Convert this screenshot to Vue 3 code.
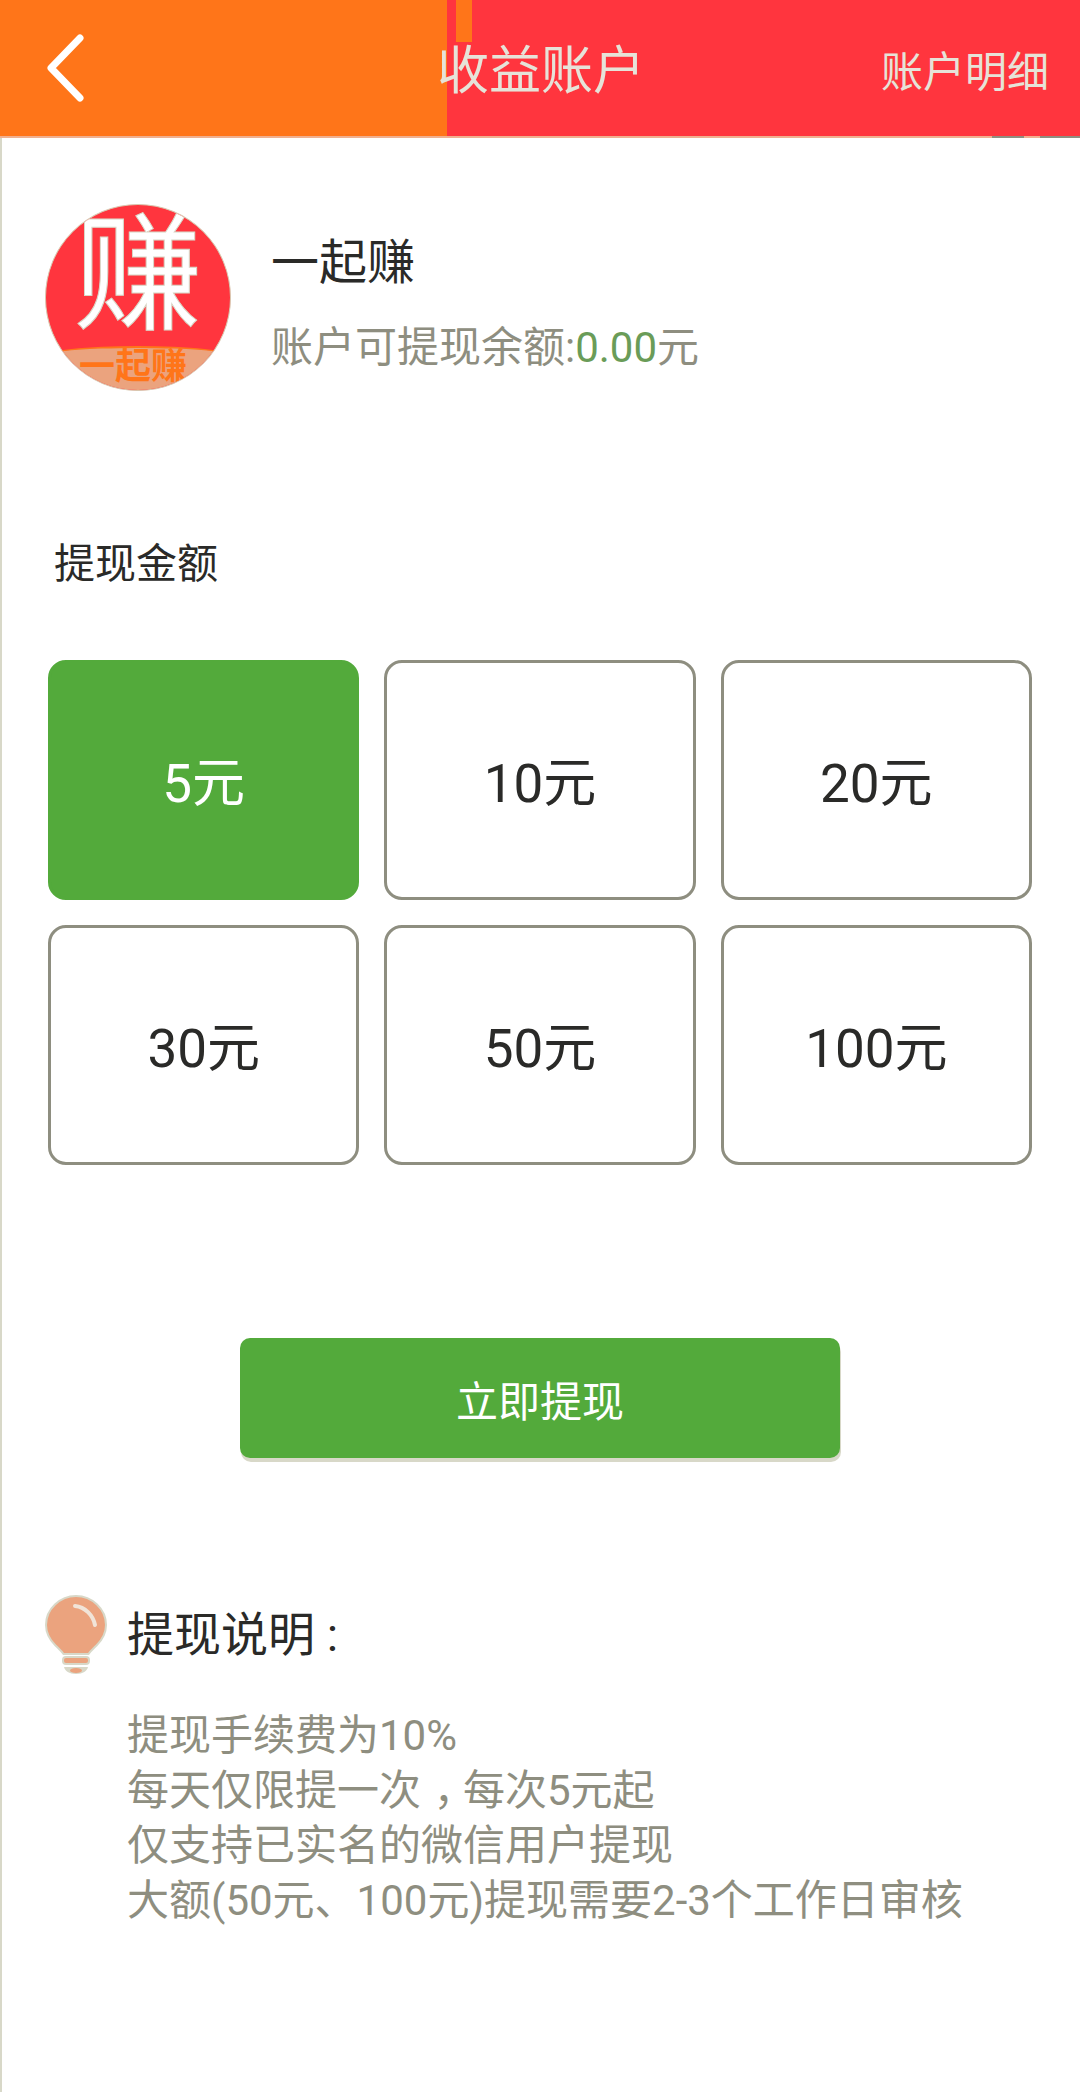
<template>
  <div class="page">
    <header class="top-bar">
      <svg class="back" width="38" height="70" viewBox="0 0 38 70" fill="none" stroke="#fff" stroke-width="7" stroke-linecap="round" stroke-linejoin="round">
        <polyline points="33 5 4 35 33 65" />
      </svg>
      <h1 class="title">收益账户</h1>
      <span class="detail-link">账户明细</span>
    </header>
    <div class="top-rule"></div>

    <main class="content">
      <section class="profile">
        <div class="avatar">
          <span class="avatar-big">赚</span>
          <div class="avatar-band"><span>一起赚</span></div>
        </div>
        <div class="profile-text">
          <div class="name">一起赚</div>
          <div class="balance">账户可提现余额:<em>0.00</em>元</div>
        </div>
      </section>

      <div class="section-label">提现金额</div>

      <div class="amounts">
        <button
          v-for="a in amounts"
          :key="a"
          class="amount"
          :class="{ active: a === selected }"
          @click="selected = a"
        >
          {{ a }}元
        </button>
      </div>

      <div class="submit-wrap">
        <button class="submit">立即提现</button>
      </div>

      <section class="notes">
        <div class="notes-head">
          <svg class="bulb" width="62" height="80" viewBox="0 0 62 80">
            <path d="M31 1C15 1 1 14 1 30c0 9 4 15 9.500 20.500 3.500 3.500 6 5.500 8 8.500h25c2-3 4.500-5 8-8.500C57 45 61 39 61 30 61 14 47 1 31 1z" fill="#eba37e" stroke="#d8d8c8" stroke-width="2" />
            <path d="M30 11c10 1 18 9 20 19" fill="none" stroke="#f1e4d8" stroke-width="4" stroke-linecap="round" />
            <rect x="18" y="62" width="26" height="7" rx="3" fill="#eba37e" stroke="#d8d8c8" stroke-width="2" />
            <path d="M19 72h24c-1 4-5 7-12 7s-11-3-12-7z" fill="#d8d8c8" />
            <ellipse cx="31" cy="75.500" rx="6" ry="2.500" fill="#eba37e" />
          </svg>
          <span>提现说明 :</span>
        </div>
        <ul class="note-list">
          <li>提现手续费为10%</li>
          <li>每天仅限提一次<span class="comma">，</span>每次5元起</li>
          <li>仅支持已实名的微信用户提现</li>
          <li>大额(50元、100元)提现需要2-3个工作日审核</li>
        </ul>
      </section>
    </main>
  </div>
</template>

<script setup>
import { ref } from 'vue'

const amounts = [5, 10, 20, 30, 50, 100]
const selected = ref(5)
</script>

<style>
body {
  background: #fff;
}
</style>

<style scoped>
.page {
  width: 1080px;
  height: 2092px;
  display: flex;
  flex-direction: column;
  overflow: hidden;
  background: #fff;
  font-family: Roboto, "Noto Sans CJK SC", sans-serif;
}

.top-bar {
  height: 136px;
  flex-shrink: 0;
  display: flex;
  align-items: center;
  position: relative;
  background: linear-gradient(90deg, #ff7519 447px, #ff353e 447px);
  color: #e6e3d8;
}

/* the stray orange strip above the title */
.top-bar::before {
  content: "";
  position: absolute;
  left: 456px;
  top: 0;
  width: 16px;
  height: 42px;
  background: #ff7519;
}

.top-rule {
  height: 2px;
  flex-shrink: 0;
  background: linear-gradient(90deg, #f0b090 992px, #8e8e80 992px, #8e8e80 1024px, #f0b090 1024px, #f0b090 1040px, #8e8e80 1040px);
}

.back {
  margin-left: 47px;
  margin-bottom: 1px;
  flex-shrink: 0;
  position: relative;
}

.title {
  position: absolute;
  left: 437px;
  top: 42px;
  margin: 0;
  font-size: 52px;
  line-height: 60px;
  font-weight: 400;
}

.detail-link {
  margin-left: auto;
  margin-right: 31px;
  font-size: 42px;
  line-height: 60px;
  position: relative;
  top: 5px;
}

.content {
  flex: 1;
  border-left: 2px solid #d8d8c8;
}

.profile {
  display: flex;
  padding: 66px 0 0 43px;
}

.avatar {
  width: 186px;
  height: 187px;
  border-radius: 50%;
  background: #ff353e;
  border: 1px solid #d8c8b0;
  box-sizing: border-box;
  position: relative;
  overflow: hidden;
  flex-shrink: 0;
}

.avatar-big {
  position: absolute;
  left: 28px;
  top: 7px;
  font-size: 128px;
  line-height: 128px;
  color: #fff;
  -webkit-text-stroke: 1px #d8d8c8;
}

.avatar-band {
  position: absolute;
  left: -2px;
  right: -2px;
  bottom: 0;
  height: 44px;
  box-sizing: border-box;
  background: #eba37e;
  border-top: 2px solid #ff7519;
  border-radius: 50% 50% 0 0 / 10px 10px 0 0;
  padding-right: 10px;
  color: #ff7519;
  font-size: 36px;
  font-weight: 700;
  line-height: 38px;
  text-align: center;
}

.profile-text {
  margin-left: 40px;
}

.name {
  margin-top: 26px;
  font-size: 48px;
  line-height: 66px;
  color: #2a2a28;
}

.balance {
  margin-top: 20px;
  font-size: 42px;
  line-height: 64px;
  color: #8e8e80;
}

.balance em {
  font-style: normal;
  color: #6a9c58;
}

.section-label {
  margin: 145px 0 0 52px;
  font-size: 41px;
  line-height: 56px;
  color: #2a2a28;
}

.amounts {
  display: grid;
  grid-template-columns: repeat(3, 1fr);
  grid-auto-rows: 240px;
  gap: 25px;
  width: 984px;
  margin: 68px 0 0 46px;
}

.amount {
  padding: 0 0 3px;
  border: 3px solid #8e8e80;
  border-radius: 18px;
  background: #fff;
  color: #2a2a28;
  font-family: inherit;
  font-size: 53px;
}

.amount.active {
  background: #53aa3b;
  border-color: #53aa3b;
  color: #fff;
}

.submit-wrap {
  margin-top: 173px;
  padding-left: 238px;
}

.submit {
  width: 600px;
  height: 120px;
  border: none;
  border-radius: 10px;
  background: #53aa3b;
  box-shadow: 1px 4px 0 #d8d8c8;
  color: #fff;
  font-family: inherit;
  font-size: 42px;
}

.notes {
  margin-top: 137px;
  padding-left: 43px;
}

.notes-head {
  display: flex;
  align-items: center;
  font-size: 47px;
  line-height: 80px;
  color: #2a2a28;
}

.bulb {
  flex-shrink: 0;
  margin-right: 20px;
}

.note-list {
  list-style: none;
  margin: 33px 0 0 82px;
  padding: 0;
  font-size: 42px;
  line-height: 55px;
  color: #8e8e80;
}

/* comma sits in the middle of its cell in the original */
.comma {
  display: inline-block;
  width: 1em;
  text-indent: 0.3em;
  white-space: nowrap;
}
</style>
